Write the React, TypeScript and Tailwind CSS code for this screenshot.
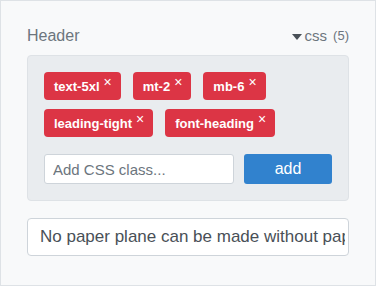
import React, { useState } from 'react';

const Tag = ({ label, onRemove }: { label: string; onRemove: () => void }) => (
  <span className="inline-flex items-center h-7 pl-[10px] pr-[9px] rounded-[4px] bg-[#dc3545] text-white text-[13px] font-bold leading-none">
    <span>{label}</span>
    <button
      onClick={onRemove}
      className="ml-[4px] -mt-[9px] text-[14px] font-normal leading-none text-white"
    >
      ×
    </button>
  </span>
);

const App = () => {
  const [classes, setClasses] = useState([
    'text-5xl',
    'mt-2',
    'mb-6',
    'leading-tight',
    'font-heading',
  ]);
  const [draft, setDraft] = useState('');

  const addClass = () => {
    if (!draft.trim()) return;
    setClasses((prev) => [...prev, draft.trim()]);
    setDraft('');
  };

  return (
    <div
      className="w-[376px] h-[286px] border border-[#dee2e6] bg-[#f8f9fa] px-[26px] pt-[23px]"
      style={{ fontFamily: '"Liberation Sans", Arial, sans-serif' }}
    >
      <div className="flex items-center justify-between h-6 mb-[7px]">
        <span className="text-[16px] text-[#6c757d]">Header</span>
        <span className="flex items-center text-[#6c757d]">
          <svg width="10" height="6" viewBox="0 0 10 6" className="mr-[3px] mt-[1px]">
            <path d="M0 0h10L5 6z" fill="#495057" />
          </svg>
          <span className="text-[15px]">css</span>
          <span className="ml-[6px] text-[13px]">({classes.length})</span>
        </span>
      </div>

      <div className="border border-[#dee2e6] rounded-[4px] bg-[#e9ecef] p-4">
        <div className="flex flex-wrap gap-x-3 gap-y-[9px]">
          {classes.map((c, i) => (
            <Tag
              key={c + i}
              label={c}
              onRemove={() => setClasses((prev) => prev.filter((_, j) => j !== i))}
            />
          ))}
        </div>

        <div className="flex gap-[10px] mt-[17px]">
          <input
            value={draft}
            onChange={(e) => setDraft(e.target.value)}
            placeholder="Add CSS class..."
            className="flex-1 min-w-0 h-[30px] px-[8px] rounded-[3px] border border-[#ced4da] bg-white text-[15px] text-[#495057] placeholder:text-[#6c757d] outline-none"
          />
          <button
            onClick={addClass}
            className="w-[88px] h-[30px] rounded-[3px] bg-[#3182ce] text-white text-[16px]"
          >
            add
          </button>
        </div>
      </div>

      <input
        defaultValue="No paper plane can be made without paper"
        className="mt-[17px] block w-full h-[38px] pl-[12px] pr-[3px] rounded-[4px] border border-[#ced4da] bg-white text-[17px] text-[#495057] outline-none"
      />
    </div>
  );
};

export default App;
